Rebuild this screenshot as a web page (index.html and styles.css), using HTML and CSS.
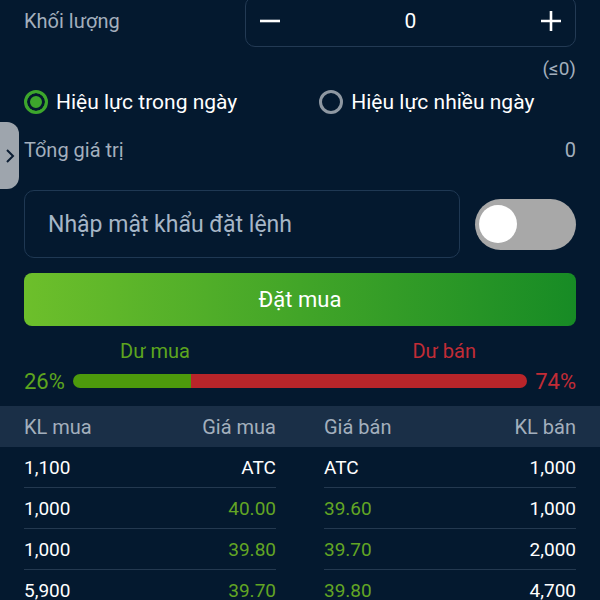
FILE: index.html
```html
<!DOCTYPE html>
<html lang="vi">
<head>
    <meta charset="UTF-8">
    <meta name="viewport" content="width=device-width, initial-scale=1.0">
    <title>Đặt lệnh mua</title>
    <link rel="stylesheet" href="styles.css">
</head>
<body>
    <div class="side-tab">
        <svg width="12" height="18" viewBox="0 0 12 18"><path d="M3 3 L9 9 L3 15" fill="none" stroke="#0b1d33" stroke-width="2"/></svg>
    </div>

    <div class="order">
        <div class="row qty-row">
            <span class="label">Khối lượng</span>
            <div class="stepper">
                <span class="step-btn">
                    <svg width="22" height="22" viewBox="0 0 22 22"><path d="M1 11 H21" stroke="#fff" stroke-width="2.6"/></svg>
                </span>
                <span class="step-value">0</span>
                <span class="step-btn">
                    <svg width="22" height="22" viewBox="0 0 22 22"><path d="M1 11 H21 M11 1 V21" stroke="#fff" stroke-width="2.6"/></svg>
                </span>
            </div>
        </div>
        <div class="limit">(≤0)</div>

        <div class="row radio-row">
            <label class="radio checked"><span class="dot"></span>Hiệu lực trong ngày</label>
            <label class="radio"><span class="dot"></span>Hiệu lực nhiều ngày</label>
        </div>

        <div class="row total-row">
            <span class="label">Tổng giá trị</span>
            <span class="label">0</span>
        </div>

        <div class="row pass-row">
            <div class="pass-box">Nhập mật khẩu đặt lệnh</div>
            <div class="toggle"><span class="knob"></span></div>
        </div>

        <button class="buy-btn">Đặt mua</button>

        <div class="surplus-labels">
            <span class="green">Dư mua</span>
            <span class="red">Dư bán</span>
        </div>
        <div class="row ratio-row">
            <span class="green">26%</span>
            <div class="ratio-bar">
                <div class="bar-buy" style="width: 26%"></div>
                <div class="bar-sell"></div>
            </div>
            <span class="red">74%</span>
        </div>
    </div>

    <div class="book">
        <div class="book-head">
            <div class="half"><span>KL mua</span><span>Giá mua</span></div>
            <div class="half"><span>Giá bán</span><span>KL bán</span></div>
        </div>
        <div class="book-row">
            <div class="half"><span>1,100</span><span>ATC</span></div>
            <div class="half"><span>ATC</span><span>1,000</span></div>
        </div>
        <div class="book-row">
            <div class="half"><span>1,000</span><span class="price">40.00</span></div>
            <div class="half"><span class="price">39.60</span><span>1,000</span></div>
        </div>
        <div class="book-row">
            <div class="half"><span>1,000</span><span class="price">39.80</span></div>
            <div class="half"><span class="price">39.70</span><span>2,000</span></div>
        </div>
        <div class="book-row">
            <div class="half"><span>5,900</span><span class="price">39.70</span></div>
            <div class="half"><span class="price">39.80</span><span>4,700</span></div>
        </div>
    </div>
</body>
</html>
```

FILE: styles.css
```css
body {
    font-family: Roboto, "Noto Sans", sans-serif;
    background-color: #04192f;
    color: #fff;
    margin: 0;
    overflow: hidden;
}
.side-tab {
    position: absolute;
    left: 0;
    top: 122px;
    width: 19px;
    height: 67px;
    background-color: #9ea5ad;
    border-radius: 0 12px 12px 0;
    display: flex;
    align-items: center;
    justify-content: center;
}
.order {
    padding: 0 24px;
}
.row {
    display: flex;
    align-items: center;
    justify-content: space-between;
}
.label {
    font-size: 20px;
    color: #a3afbd;
}
.qty-row {
    margin-top: -5px;
    height: 52px;
}
.stepper {
    width: 331px;
    height: 51px;
    border: 1px solid #233a54;
    border-radius: 10px;
    display: flex;
    align-items: center;
    justify-content: space-between;
    padding: 0 13px;
    box-sizing: border-box;
}
.step-btn {
    display: flex;
}
.step-value {
    font-size: 21px;
}
.limit {
    text-align: right;
    font-size: 19px;
    color: #a3afbd;
    margin-top: 10px;
    line-height: 24px;
}
.radio-row {
    justify-content: flex-start;
    gap: 82px;
    height: 24px;
    margin-top: 9px;
}
.radio {
    display: flex;
    align-items: center;
    gap: 8px;
    font-size: 21px;
}
.dot {
    width: 18px;
    height: 18px;
    border: 3px solid #8f98a2;
    border-radius: 50%;
}
.radio.checked .dot {
    border-color: #3da62c;
    background-color: #3da62c;
    box-shadow: inset 0 0 0 3px #04192f;
}
.total-row {
    height: 24px;
    margin-top: 24px;
}
.pass-row {
    margin-top: 28px;
    height: 68px;
}
.pass-box {
    width: 436px;
    height: 68px;
    box-sizing: border-box;
    border: 1px solid #1f3853;
    border-radius: 10px;
    padding-left: 23px;
    display: flex;
    align-items: center;
    font-size: 23px;
    color: #a6b6c7;
}
.toggle {
    width: 101px;
    height: 51px;
    background-color: #a8a8a8;
    border-radius: 26px;
    display: flex;
    align-items: center;
    padding-left: 4px;
    box-sizing: border-box;
}
.knob {
    width: 38px;
    height: 38px;
    background-color: #fff;
    border-radius: 50%;
}
.buy-btn {
    display: block;
    width: 100%;
    height: 53px;
    margin-top: 15px;
    border: none;
    border-radius: 8px;
    background: linear-gradient(to right, #6dbf2b, #178b25);
    color: #fff;
    font-family: inherit;
    font-size: 22px;
}
.surplus-labels {
    display: flex;
    justify-content: space-between;
    padding: 0 100px 0 96px;
    font-size: 20px;
    margin-top: 13px;
    height: 24px;
    line-height: 24px;
}
.green {
    color: #5da51e;
}
.red {
    color: #c22c36;
}
.ratio-row {
    height: 28px;
    margin-top: 4px;
    font-size: 22px;
    gap: 8px;
}
.ratio-bar {
    flex: 1;
    display: flex;
    height: 14px;
    border-radius: 7px;
    overflow: hidden;
}
.bar-buy {
    background-color: #4d9a0c;
}
.bar-sell {
    flex: 1;
    background-color: #b9252a;
}
.book {
    margin-top: 11px;
}
.book-head {
    background-color: #1a2f47;
    height: 41px;
    display: flex;
    gap: 48px;
    padding: 0 24px;
    color: #a3afbd;
    font-size: 20px;
}
.book-row {
    display: flex;
    gap: 48px;
    padding: 0 24px;
    font-size: 19px;
}
.half {
    flex: 1;
    display: flex;
    align-items: center;
    justify-content: space-between;
}
.book-row .half {
    height: 40px;
    border-bottom: 1px solid #243950;
}
.price {
    color: #62a524;
}
```
